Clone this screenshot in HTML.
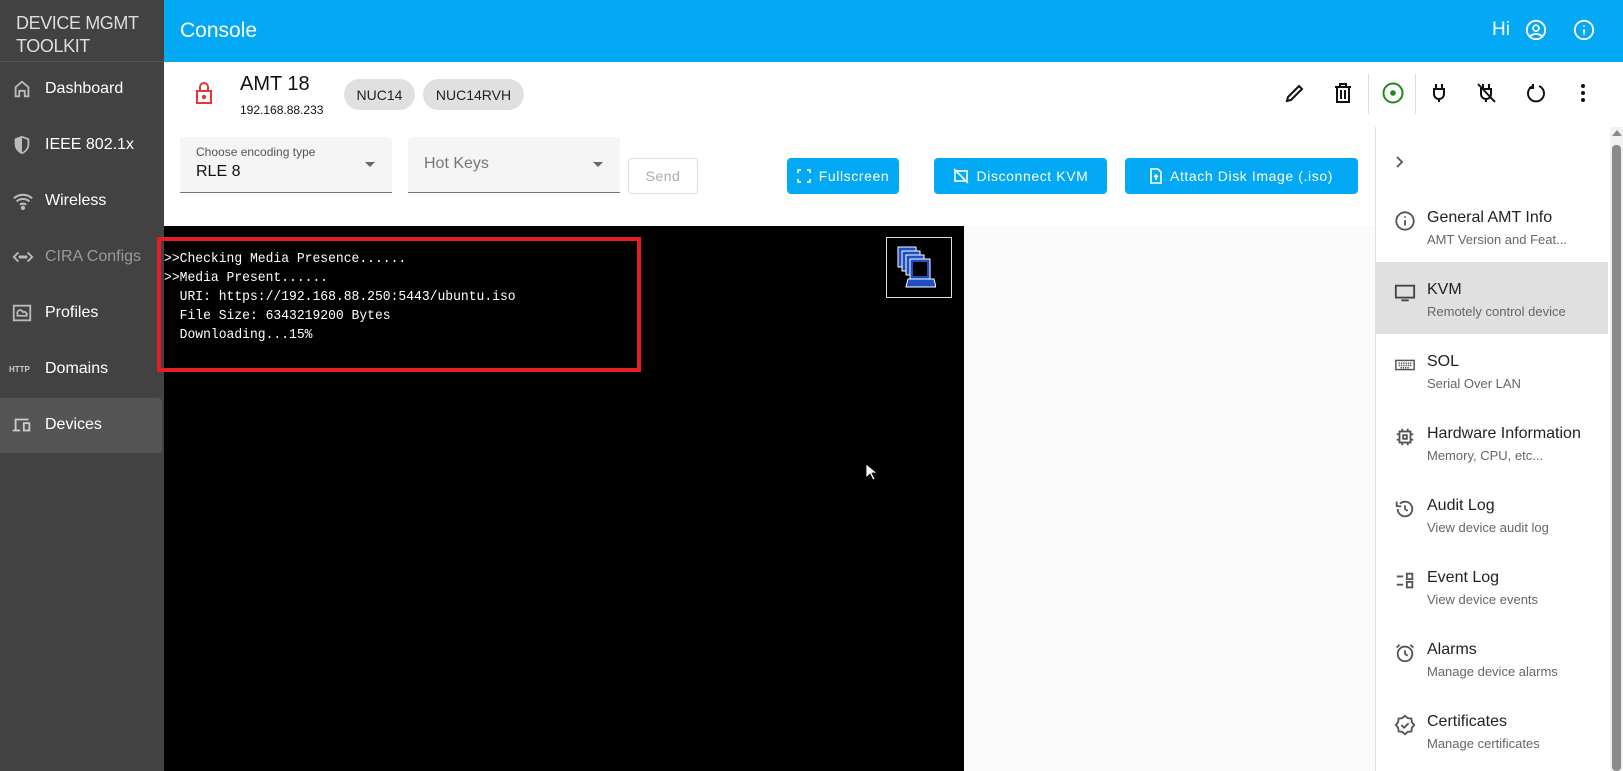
<!DOCTYPE html>
<html><head><meta charset="utf-8"><style>
*{margin:0;padding:0;box-sizing:border-box}
body{width:1623px;height:771px;overflow:hidden;font-family:"Liberation Sans",sans-serif;background:#fff;position:relative}
.abs{position:absolute}
#side{left:0;top:0;width:164px;height:771px;background:#424242}
.nav{position:absolute;left:0;width:162px;height:54px;display:flex;align-items:center;color:#fff;font-size:16px}
.nav svg{position:absolute;left:11px}
.nav span{position:absolute;left:45px}
.btn{position:absolute;top:158px;height:36px;background:#03a9f4;color:#fff;border-radius:4px;font-size:14px;letter-spacing:.6px;display:flex;align-items:center;justify-content:center;gap:8px}
.tb{position:absolute;top:81px}
.item{position:absolute;left:1375px;width:233px;height:72px}
.item .t{position:absolute;left:52px;top:19px;font-size:16px;color:#222}
.item .s{position:absolute;left:52px;top:42px;font-size:13px;color:#666}
.item svg{position:absolute;left:19px;top:20px}
.term{position:absolute;left:164px;font-family:"Liberation Mono",monospace;font-size:14px;color:#fff;white-space:pre;transform:scaleX(.93);transform-origin:left}
</style></head><body>
<div class="abs" style="left:164px;top:0;width:1459px;height:62px;background:#03a9f4"></div>
<div class="abs" style="left:180px;top:19px;font-size:21px;color:#fff">Console</div>
<div class="abs" style="left:1492px;top:19px;font-size:19px;color:#fff">Hi</div>
<svg class="abs" style="left:1525px;top:19px" width="22" height="22" viewBox="0 0 24 24" fill="none" stroke="#fff" stroke-width="2"><circle cx="12" cy="12" r="10"/><circle cx="12" cy="10" r="3.2"/><path d="M6 18.5c3-3 9-3 12 0"/></svg>
<svg class="abs" style="left:1573px;top:19px" width="22" height="22" viewBox="0 0 24 24" fill="none" stroke="#fff" stroke-width="2"><circle cx="12" cy="12" r="10"/><path d="M12 11v6M12 7v1.5"/></svg>

<div id="side" class="abs"></div>
<div class="abs" style="left:16px;top:12px;font-size:18px;color:#ddd;line-height:23px;letter-spacing:-.4px">DEVICE MGMT<br>TOOLKIT</div>
<div class="abs" style="left:0;top:61px;width:164px;height:1px;background:#555"></div>
<div class="nav" style="top:62px"><svg width="22" height="22" viewBox="0 0 24 24" fill="none" stroke="#bbb" stroke-width="2"><path d="M5 20V10l7-6 7 6v10h-4v-6H9v6z"/></svg><span>Dashboard</span></div>
<div class="nav" style="top:118px"><svg width="22" height="22" viewBox="0 0 24 24"><path d="M12 2l8 3v6c0 5-3.5 9-8 11-4.5-2-8-6-8-11V5z" fill="#bbb"/><path d="M12 4v16c3.5-1.8 6-5 6-9V6.5z" fill="#424242"/></svg><span>IEEE 802.1x</span></div>
<div class="nav" style="top:174px"><svg width="24" height="22" viewBox="0 0 24 24" fill="none" stroke="#bbb" stroke-width="2.2"><path d="M2 9c6-5 14-5 20 0M5 12.5c4-3.5 10-3.5 14 0M8.5 16c2-1.6 5-1.6 7 0"/><circle cx="12" cy="19.5" r="1.3" fill="#bbb"/></svg><span>Wireless</span></div>
<div class="nav" style="top:230px;color:#9a9a9a"><svg width="24" height="22" viewBox="0 0 24 24" fill="none" stroke="#bbb" stroke-width="2"><path d="M7 7l-5 5 5 5M17 7l5 5-5 5"/><circle cx="9" cy="12" r=".8" fill="#bbb"/><circle cx="12" cy="12" r=".8" fill="#bbb"/><circle cx="15" cy="12" r=".8" fill="#bbb"/></svg><span>CIRA Configs</span></div>
<div class="nav" style="top:286px"><svg width="22" height="22" viewBox="0 0 24 24" fill="none" stroke="#bbb" stroke-width="2"><rect x="3" y="4" width="18" height="16"/><path d="M7 15h10a3 3 0 0 0-4-4 3 3 0 0 0-6 2z"/></svg><span>Profiles</span></div>
<div class="nav" style="top:342px"><span style="left:9px;font-size:8px;font-weight:bold;color:#ccc">HTTP</span><span>Domains</span></div>
<div class="abs" style="left:0;top:398px;width:162px;height:55px;background:#555;border-radius:0 4px 4px 0"></div>
<div class="nav" style="top:398px"><svg width="22" height="22" viewBox="0 0 24 24" fill="none" stroke="#ccc" stroke-width="2"><path d="M5 17V6h14M2 18h8"/><rect x="14" y="10" width="6" height="8"/></svg><span>Devices</span></div>

<svg class="abs" style="left:193px;top:81px" width="22" height="24" viewBox="0 0 22 24" fill="none" stroke="#e53935" stroke-width="2"><rect x="4" y="10" width="14" height="12"/><path d="M7 10V6a4 4 0 0 1 8 0v4"/><circle cx="11" cy="16" r="1.2" fill="#e53935"/></svg>
<div class="abs" style="left:240px;top:73px;font-size:20px;color:#111">AMT 18</div>
<div class="abs" style="left:240px;top:103px;font-size:12px;color:#111">192.168.88.233</div>
<div class="abs" style="left:344px;top:79px;width:71px;height:31px;border-radius:16px;background:#e0e0e0;font-size:14px;display:flex;align-items:center;justify-content:center;color:#222">NUC14</div>
<div class="abs" style="left:423px;top:79px;width:101px;height:31px;border-radius:16px;background:#e0e0e0;font-size:14px;display:flex;align-items:center;justify-content:center;color:#222">NUC14RVH</div>

<svg class="tb" style="left:1283px" width="24" height="24" viewBox="0 0 24 24" fill="none" stroke="#111" stroke-width="2"><path d="M4 20l1-4L16 5l3 3L8 19z"/></svg>
<svg class="tb" style="left:1331px" width="24" height="24" viewBox="0 0 24 24" fill="none" stroke="#111" stroke-width="2"><path d="M4 6h16M9 6V3h6v3M6 6v15h12V6M10 9v9M14 9v9"/></svg>
<div class="abs" style="left:1368px;top:74px;width:1px;height:40px;background:#ddd"></div>
<svg class="tb" style="left:1381px" width="24" height="24" viewBox="0 0 24 24" fill="none" stroke="#1b8a1b" stroke-width="2"><circle cx="12" cy="12" r="9.5"/><circle cx="12" cy="12" r="2.8" fill="#1b8a1b" stroke="none"/></svg>
<div class="abs" style="left:1415px;top:74px;width:1px;height:40px;background:#ddd"></div>
<svg class="tb" style="left:1427px" width="24" height="24" viewBox="0 0 24 24" fill="none" stroke="#111" stroke-width="2"><path d="M9 3v5M15 3v5M7 8h10v5a5 5 0 0 1-10 0zM12 18v3"/></svg>
<svg class="tb" style="left:1474px" width="24" height="24" viewBox="0 0 24 24" fill="none" stroke="#111" stroke-width="2"><path d="M9 3v5M15 3v5M7 8h10v5a5 5 0 0 1-10 0zM12 18v3M4 3l17 18"/></svg>
<svg class="tb" style="left:1524px" width="24" height="24" viewBox="0 0 24 24" fill="none" stroke="#111" stroke-width="2"><path d="M9 5a8 8 0 1 0 6 0"/><path d="M9 3v4H5" /></svg>
<svg class="tb" style="left:1571px" width="24" height="24" viewBox="0 0 24 24" fill="#111"><circle cx="12" cy="5" r="2"/><circle cx="12" cy="12" r="2"/><circle cx="12" cy="19" r="2"/></svg>

<div class="abs" style="left:180px;top:137px;width:212px;height:56px;background:#f5f5f5;border-radius:4px 4px 0 0;border-bottom:1px solid #777"></div>
<div class="abs" style="left:196px;top:145px;font-size:12px;color:#555">Choose encoding type</div>
<div class="abs" style="left:196px;top:163px;font-size:16px;color:#111">RLE 8</div>
<div class="abs" style="left:365px;top:162px;border:5px solid transparent;border-top-color:#666"></div>
<div class="abs" style="left:408px;top:137px;width:212px;height:56px;background:#f5f5f5;border-radius:4px 4px 0 0;border-bottom:1px solid #777"></div>
<div class="abs" style="left:424px;top:155px;font-size:16px;color:#777">Hot Keys</div>
<div class="abs" style="left:593px;top:162px;border:5px solid transparent;border-top-color:#666"></div>
<div class="abs" style="left:628px;top:158px;width:70px;height:36px;border:1px solid #ddd;border-radius:4px;font-size:14px;color:#aaa;display:flex;align-items:center;justify-content:center;letter-spacing:.5px">Send</div>

<div class="btn" style="left:787px;width:112px"><svg width="14" height="14" viewBox="0 0 14 14" fill="none" stroke="#fff" stroke-width="1.6"><path d="M1 4V1h3M10 1h3v3M13 10v3h-3M4 13H1v-3"/></svg>Fullscreen</div>
<div class="btn" style="left:934px;width:173px"><svg width="16" height="16" viewBox="0 0 16 16" fill="none" stroke="#fff" stroke-width="1.6"><rect x="2" y="3" width="12" height="10"/><path d="M1 1l14 14"/></svg>Disconnect KVM</div>
<div class="btn" style="left:1125px;width:233px"><svg width="12" height="16" viewBox="0 0 12 16" fill="none" stroke="#fff" stroke-width="1.6"><path d="M1 1h7l3 3v11H1z"/><path d="M6 12V7M4 9l2-2 2 2"/></svg>Attach Disk Image (.iso)</div>

<div class="abs" style="left:964px;top:226px;width:411px;height:545px;background:#fafafa"></div>
<div class="abs" style="left:164px;top:226px;width:800px;height:545px;background:#000"></div>
<div class="abs" style="left:157px;top:237px;width:484px;height:135px;border:4px solid #e81c24"></div>
<div class="term" style="top:251px">&gt;&gt;Checking Media Presence......</div>
<div class="term" style="top:270px">&gt;&gt;Media Present......</div>
<div class="term" style="top:289px">  URI: https://192.168.88.250:5443/ubuntu.iso</div>
<div class="term" style="top:308px">  File Size: 6343219200 Bytes</div>
<div class="term" style="top:327px">  Downloading...15%</div>
<div class="abs" style="left:886px;top:237px;width:66px;height:61px;border:1px solid #ddd"></div>
<svg class="abs" style="left:896px;top:245px" width="40" height="44" viewBox="0 0 40 44"><g fill="#1e4fc0" stroke="#fff" stroke-width="1"><rect x="2" y="2" width="18" height="20"/><rect x="6" y="6" width="18" height="20"/><rect x="10" y="10" width="18" height="20"/><rect x="14" y="14" width="20" height="20"/><path d="M12 34h26l2 8H10z"/></g><rect x="17" y="17" width="14" height="14" fill="#000"/></svg>
<svg class="abs" style="left:865px;top:463px" width="12" height="18" viewBox="0 0 12 18"><path d="M1 1v14l4-4 3 6 2-1-3-6h5z" fill="#fff" stroke="#000" stroke-width=".8"/></svg>

<div class="abs" style="left:1375px;top:127px;width:1px;height:644px;background:#e0e0e0"></div>
<svg class="abs" style="left:1394px;top:155px" width="12" height="14" viewBox="0 0 12 14" fill="none" stroke="#555" stroke-width="1.8"><path d="M3 2l5 5-5 5"/></svg>
<div class="abs" style="left:1375px;top:262px;width:233px;height:72px;background:#e0e0e0"></div>
<div class="item" style="top:190px"><svg width="22" height="22" viewBox="0 0 24 24" fill="none" stroke="#555" stroke-width="2"><circle cx="12" cy="12" r="9.5"/><path d="M12 11v6M12 7v1.5"/></svg><div class="t">General AMT Info</div><div class="s">AMT Version and Feat...</div></div>
<div class="item" style="top:262px"><svg width="22" height="22" viewBox="0 0 24 24" fill="none" stroke="#444" stroke-width="2"><rect x="2" y="4" width="20" height="13"/><path d="M8 20h8"/></svg><div class="t">KVM</div><div class="s">Remotely control device</div></div>
<div class="item" style="top:334px"><svg width="22" height="22" viewBox="0 0 24 24" fill="none" stroke="#555" stroke-width="1.6"><rect x="2" y="7" width="20" height="10"/><path d="M5 10h14M5 12.5h14M7 15h10" stroke-dasharray="1.5 1"/></svg><div class="t">SOL</div><div class="s">Serial Over LAN</div></div>
<div class="item" style="top:406px"><svg width="22" height="22" viewBox="0 0 24 24" fill="none" stroke="#555" stroke-width="2"><rect x="6" y="6" width="12" height="12"/><rect x="10" y="10" width="4" height="4"/><path d="M3 9h3M3 15h3M18 9h3M18 15h3M9 3v3M15 3v3M9 18v3M15 18v3"/></svg><div class="t">Hardware Information</div><div class="s">Memory, CPU, etc...</div></div>
<div class="item" style="top:478px"><svg width="22" height="22" viewBox="0 0 24 24" fill="none" stroke="#555" stroke-width="2"><path d="M4 12a8 8 0 1 0 2.5-5.8"/><path d="M3 4v5h5M12 8v4l3 2"/></svg><div class="t">Audit Log</div><div class="s">View device audit log</div></div>
<div class="item" style="top:550px"><svg width="22" height="22" viewBox="0 0 24 24" fill="none" stroke="#555" stroke-width="2"><path d="M3 7h7M3 16h7"/><rect x="14" y="4" width="6" height="6"/><rect x="14" y="13" width="6" height="6"/></svg><div class="t">Event Log</div><div class="s">View device events</div></div>
<div class="item" style="top:622px"><svg width="22" height="22" viewBox="0 0 24 24" fill="none" stroke="#555" stroke-width="2"><circle cx="12" cy="13" r="8"/><path d="M12 9v4l3 2M3 6l3-3M21 6l-3-3"/></svg><div class="t">Alarms</div><div class="s">Manage device alarms</div></div>
<div class="item" style="top:694px"><svg width="22" height="22" viewBox="0 0 24 24" fill="none" stroke="#555" stroke-width="2"><path d="M12 2l3 2.5 4 .5.5 4L22 12l-2.5 3-.5 4-4 .5L12 22l-3-2.5-4-.5-.5-4L2 12l2.5-3 .5-4 4-.5z"/><path d="M8 12l3 3 5-5"/></svg><div class="t">Certificates</div><div class="s">Manage certificates</div></div>

<div class="abs" style="left:1610px;top:127px;width:13px;height:644px;background:#f1f1f1"></div>
<div class="abs" style="left:1612px;top:130px;border:5px solid transparent;border-bottom:6px solid #888;border-top:0"></div>
<div class="abs" style="left:1612px;top:145px;width:9px;height:626px;background:#8a8a8a;border-radius:4px"></div>
</body></html>
